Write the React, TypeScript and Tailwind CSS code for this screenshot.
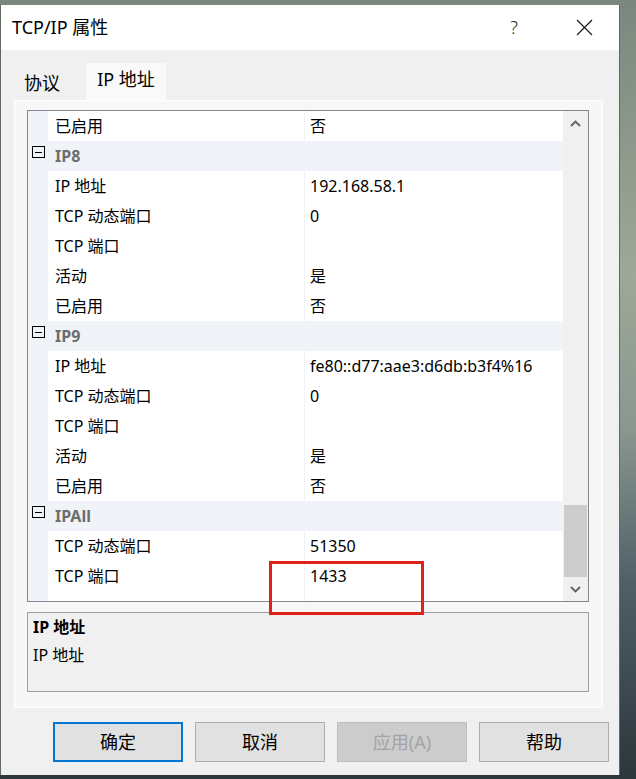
import React from 'react';

type Row =
  | { kind: 'cat'; name: string }
  | { kind: 'prop'; label: string; value: string };

const rows: Row[] = [
  { kind: 'prop', label: '已启用', value: '否' },
  { kind: 'cat', name: 'IP8' },
  { kind: 'prop', label: 'IP 地址', value: '192.168.58.1' },
  { kind: 'prop', label: 'TCP 动态端口', value: '0' },
  { kind: 'prop', label: 'TCP 端口', value: '' },
  { kind: 'prop', label: '活动', value: '是' },
  { kind: 'prop', label: '已启用', value: '否' },
  { kind: 'cat', name: 'IP9' },
  { kind: 'prop', label: 'IP 地址', value: 'fe80::d77:aae3:d6db:b3f4%16' },
  { kind: 'prop', label: 'TCP 动态端口', value: '0' },
  { kind: 'prop', label: 'TCP 端口', value: '' },
  { kind: 'prop', label: '活动', value: '是' },
  { kind: 'prop', label: '已启用', value: '否' },
  { kind: 'cat', name: 'IPAll' },
  { kind: 'prop', label: 'TCP 动态端口', value: '51350' },
  { kind: 'prop', label: 'TCP 端口', value: '1433' },
  { kind: 'prop', label: '', value: '' },
];

function Minus() {
  return (
    <div className="w-[13px] h-[12px] border border-black flex items-center justify-center">
      <div className="w-[7px] h-px bg-black" />
    </div>
  );
}

function Chevron({ up }: { up?: boolean }) {
  return (
    <svg width="11" height="7" viewBox="0 0 11 7">
      <polyline
        points={up ? '1,6 5.5,1.5 10,6' : '1,1 5.5,5.5 10,1'}
        fill="none"
        stroke="#606060"
        strokeWidth="1.8"
      />
    </svg>
  );
}

function GridRow({ row }: { row: Row }) {
  if (row.kind === 'cat') {
    return (
      <div className="h-[30px] shrink-0 flex items-center bg-[#f0f3f8]">
        <div className="w-[20px] flex justify-center -mt-[8px]">
          <Minus />
        </div>
        <span className="pl-[7px] font-bold text-[#6d6d6d]">{row.name}</span>
      </div>
    );
  }
  return (
    <div className="h-[30px] shrink-0 flex bg-[#f0f3f8]">
      <div className="w-[20px]" />
      <div className="w-[256px] bg-white flex items-center pl-[7px]">{row.label}</div>
      <div className="w-px bg-[#f0f3f8]" />
      <div className="flex-1 bg-white flex items-center pl-[5px]">{row.value}</div>
    </div>
  );
}

function Button({ label, primary, disabled }: { label: string; primary?: boolean; disabled?: boolean }) {
  const cls = primary
    ? 'border-2 border-[#0078d7] bg-[#e1e1e1] text-black'
    : disabled
      ? 'border border-[#bfbfbf] bg-[#cccccc] text-[#a3a3a3]'
      : 'border border-[#adadad] bg-[#e1e1e1] text-black';
  return (
    <div className={`w-[130px] h-[40px] flex items-center justify-center text-[18px] ${cls}`}>
      {label}
    </div>
  );
}

export default function App() {
  return (
    <div
      className="relative w-[636px] h-[779px] pt-[5px] overflow-hidden bg-[linear-gradient(180deg,#7b877e_0%,#9ea898_35%,#8a9790_55%,#4f5f66_75%,#2c363b_100%)]"
      style={{ fontFamily: '"Noto Sans", "Noto Sans CJK SC", sans-serif' }}
    >
      <div className="w-[620px] h-[770px] flex flex-col bg-[#f0f0f0] border-l border-r border-[#5f6a62] text-[16px] text-black">
        {/* title bar */}
        <div className="h-[45px] shrink-0 bg-white flex items-center pl-[11px] pr-[26px]">
          <span className="text-[18px]">TCP/IP 属性</span>
          <span className="ml-auto mr-[3px] text-[18px] font-light text-[#222]">?</span>
          <svg className="ml-[55px]" width="17" height="17" viewBox="0 0 17 17">
            <path d="M1 1 L16 16 M16 1 L1 16" stroke="#111" strokeWidth="1.1" />
          </svg>
        </div>

        {/* tabs */}
        <div className="h-[50px] shrink-0 flex items-end pl-[14px]">
          <div className="w-[71px] h-[34px] flex items-center pl-[9px] text-[18px]">协议</div>
          <div className="w-[80px] h-[37px] bg-[#f9f9f9] flex items-center justify-center text-[18px] pb-[4px]">
            IP 地址
          </div>
        </div>

        {/* tab panel */}
        <div className="ml-[13px] w-[589px] h-[608px] shrink-0 bg-[#f7f7f7] border border-white flex flex-col pl-[12px] pr-[13px] pt-[9px]">
          {/* property grid */}
          <div className="h-[492px] shrink-0 border border-[#828790] bg-white flex overflow-hidden">
            <div className="flex-1 flex flex-col overflow-hidden">
              {rows.map((r, i) => (
                <GridRow key={i} row={r} />
              ))}
            </div>
            <div className="w-[25px] bg-[#f0f0f0] flex flex-col">
              <div className="h-[25px] flex items-center justify-center">
                <Chevron up />
              </div>
              <div className="flex-1 flex flex-col justify-end px-px">
                <div className="h-[72px] bg-[#cdcdcd]" />
              </div>
              <div className="h-[24px] flex items-center justify-center">
                <Chevron />
              </div>
            </div>
          </div>

          {/* description */}
          <div className="mt-[10px] h-[80px] shrink-0 border border-[#a0a0a0] bg-[#f0f0f0] pl-[5px] flex flex-col">
            <div className="h-[28px] flex items-center font-bold">IP 地址</div>
            <div className="h-[28px] flex items-center">IP 地址</div>
          </div>
        </div>

        {/* buttons */}
        <div className="flex gap-[12px] pl-[52px] pt-[14px]">
          <Button label="确定" primary />
          <Button label="取消" />
          <Button label="应用(A)" disabled />
          <Button label="帮助" />
        </div>
      </div>

      {/* red annotation box */}
      <div className="absolute left-[269px] top-[561px] w-[155px] h-[54px] border-[3px] border-[#e0201b]" />
    </div>
  );
}
